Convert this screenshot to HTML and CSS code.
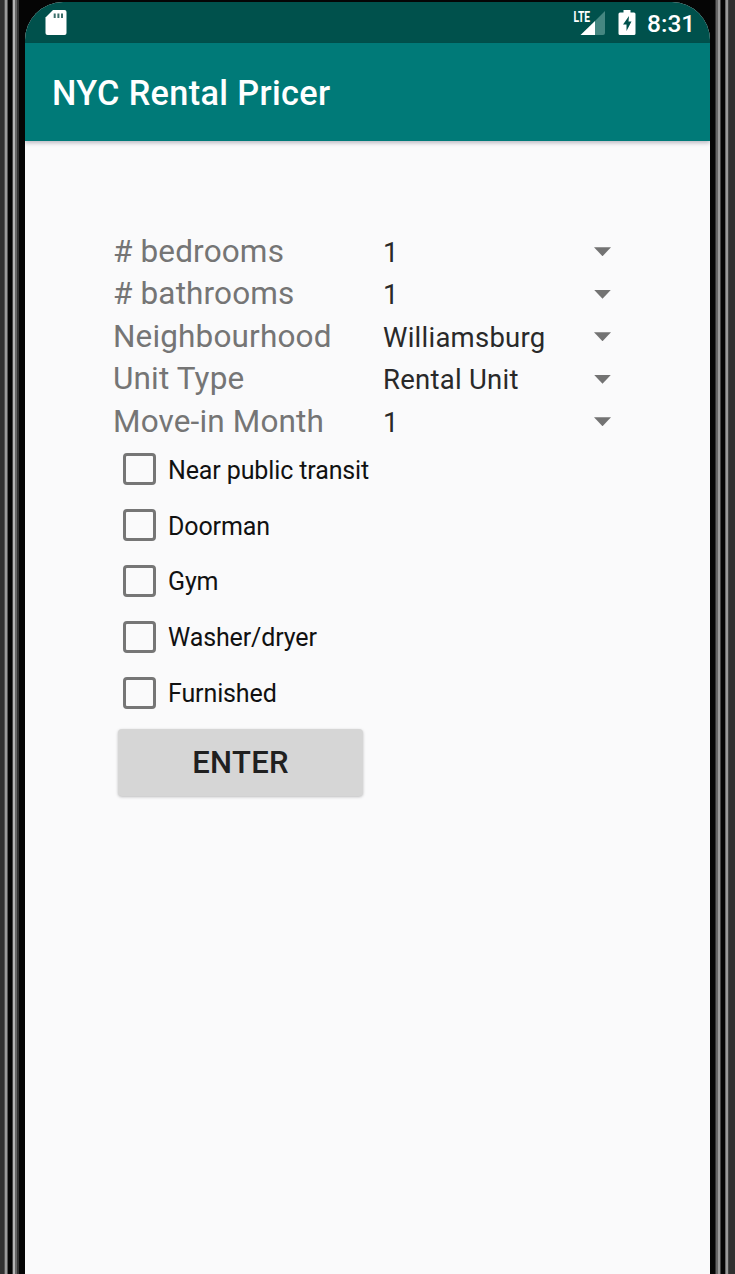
FILE: index.html
```html
<!DOCTYPE html>
<html lang="en">
<head>
<meta charset="utf-8">
<title>NYC Rental Pricer</title>
<link rel="stylesheet" href="styles.css">
</head>
<body>
<div class="device">
  <div class="bezel bezel-left"></div>
  <main class="screen">
    <div class="status">
      <svg class="sd" width="22" height="26" viewBox="0 0 22 26"><path fill="#fff" d="M8 0h11.500a2 2 0 0 1 2 2v21a2 2 0 0 1-2 2H2.500a2 2 0 0 1-2-2V7.500z"/><path fill="#3c6f6b" d="M8.700 3.500h2v4.500h-2zM12.400 3.500h2v4.500h-2zM16 3.500h2v4.500h-2z"/></svg>
      <div class="status-right">
        <svg class="signal" width="32" height="26" viewBox="0 0 32 26"><path fill="#458781" d="M32 1v22a2 2 0 0 1-2 2H22V11z"/><path fill="#fff" d="M22 11v14H7.500z"/><text class="lte" x=".5" y="11.500" textLength="16.500" lengthAdjust="spacingAndGlyphs">LTE</text></svg>
        <svg class="battery" width="18" height="26" viewBox="0 0 18 26"><path fill="#fff" d="M5.500 0h7v2.500H16q1.500 0 1.500 1.500V23.500q0 1.500-1.500 1.500H2Q.5 25 .5 23.500V4Q.5 2.500 2 2.500h3.500z"/><path fill="#00514c" d="M11 6 5 14.500h3.500V21L13.500 11.500H10.500z"/></svg>
        <span class="clock">8:31</span>
      </div>
    </div>
    <header class="appbar"><h1 class="title">NYC Rental Pricer</h1></header>
    <form class="form">
      <div class="field"><span class="label">#&nbsp;bedrooms</span><span class="value">1</span><i class="arrow"></i></div>
      <div class="field"><span class="label">#&nbsp;bathrooms</span><span class="value">1</span><i class="arrow"></i></div>
      <div class="field"><span class="label">Neighbourhood</span><span class="value">Williamsburg</span><i class="arrow"></i></div>
      <div class="field"><span class="label">Unit Type</span><span class="value">Rental Unit</span><i class="arrow"></i></div>
      <div class="field"><span class="label">Move-in Month</span><span class="value">1</span><i class="arrow"></i></div>
      <div class="checks">
        <div class="check"><i class="box"></i><span>Near public transit</span></div>
        <div class="check"><i class="box"></i><span>Doorman</span></div>
        <div class="check"><i class="box"></i><span>Gym</span></div>
        <div class="check"><i class="box"></i><span>Washer/dryer</span></div>
        <div class="check"><i class="box"></i><span>Furnished</span></div>
      </div>
      <button class="enter" type="button">ENTER</button>
    </form>
  </main>
  <div class="bezel bezel-right"></div>
</div>
</body>
</html>
```
FILE: styles.css
```css
* { box-sizing: border-box; }
body { margin: 0; background: #050505; font-family: Roboto, sans-serif; }
.device { display: flex; width: 735px; height: 1274px; overflow: hidden; background: #050505; }
.bezel { flex: none; width: 25px; }
.bezel-left { background: linear-gradient(90deg, #303030 0 4px, #555 4px 5px, #999 5px 7px, #555 7px 8px, #050505 8px 12px, #444 12px 13px, #b4b4b4 13px 15px, #666 15px 17px, #333 17px 19px, #050505 19px); }
.bezel-right { background: linear-gradient(90deg, #050505 0 5px, #333 5px 6px, #666 6px 8px, #999 8px 10px, #444 10px 11px, #050505 11px 15px, #666 15px 16px, #999 16px 18px, #444 18px 19px, #303030 19px); }
.screen { width: 685px; height: 1272px; margin-top: 2px; display: flex; flex-direction: column; background: #fafafb; border-radius: 38px 38px 0 0; overflow: hidden; }
.status { height: 41px; flex: none; background: #00514c; display: flex; justify-content: space-between; padding: 8px 16px 0 20px; }
.status-right { display: flex; }
.signal { margin-right: 13px; overflow: visible; }
.lte { font: 700 14.500px Roboto, sans-serif; fill: #fff; }
.battery { margin-right: 11px; }
.clock { font-size: 24.500px; font-weight: 500; line-height: 27px; color: #fff; width: 47px; white-space: nowrap; }
.signal, .battery { flex: none; }
.appbar { height: 98px; flex: none; background: #007a78; display: flex; align-items: center; padding: 2px 0 0 27px; box-shadow: 0 2px 4px rgba(30,20,50,.28); }
.title { margin: 0; font-size: 34.300px; font-weight: 500; letter-spacing: .35px; color: #fff; line-height: 38px; }
.form { padding: 89px 0 0 88px; }
.field { display: flex; align-items: center; height: 42.500px; width: 500px; }
.label { width: 270px; padding-top: 1px; font-size: 31.500px; letter-spacing: .15px; line-height: 42px; color: #757575; white-space: nowrap; }
.value { width: 211px; padding-top: 3px; font-size: 27.500px; letter-spacing: .25px; line-height: 40px; color: #292929; }
.arrow { width: 17px; height: 9px; margin-top: 1px; background: #737373; clip-path: polygon(0 0, 100% 0, 50% 100%); }
.checks { padding-left: 10px; }
.check { display: flex; align-items: center; gap: 12px; height: 55.800px; font-size: 25px; letter-spacing: -.12px; color: #111; }
.box { width: 33px; height: 32px; margin-top: -2px; border: 3px solid #767676; border-radius: 4px; }
.enter { display: flex; align-items: center; justify-content: center; width: 245px; height: 67px; margin: 8px 0 0 5px; padding: 0; border: 0; border-radius: 4px; background: #d6d6d6; box-shadow: 0 1px 3px rgba(0,0,0,.25); font: 500 31px Roboto, sans-serif; letter-spacing: .35px; color: #202020; }
```
